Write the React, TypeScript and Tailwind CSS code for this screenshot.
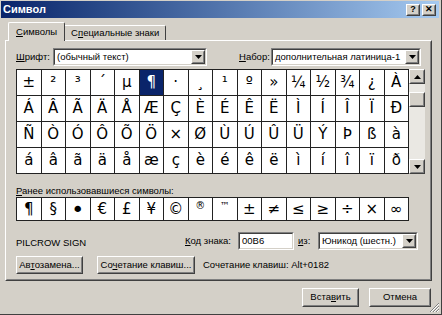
const rows = [
  "±²³´µ¶·¸¹º»¼½¾¿À",
  "ÁÂÃÄÅÆÇÈÉÊËÌÍÎÏÐ",
  "ÑÒÓÔÕÖ×ØÙÚÛÜÝÞßà",
  "áâãäåæçèéêëìíîïð",
];
const recent = "¶§•€£¥©®™±≠≤≥÷×∞";

// glyphs that Tahoma draws smaller or bigger in the recent row
const recentStyle: Record<string, string> = {
  "•": "text-[22px]",
  "®": "text-[10px] -translate-y-[4px]",
  "™": "text-[10px] -translate-y-[4px]",
};

const Sunken = ({ className = "", children }: { className?: string; children?: React.ReactNode }) => (
  <div className={`border border-t-[#808080] border-l-[#808080] border-r-white border-b-white ${className}`}>
    <div className="h-full flex items-center bg-white border border-t-[#404040] border-l-[#404040] border-r-[#d4d0c8] border-b-[#d4d0c8]">
      {children}
    </div>
  </div>
);

const Raised = ({ className = "", children }: { className?: string; children?: React.ReactNode }) => (
  <div className={`bg-[#d4d0c8] border border-t-white border-l-white border-r-[#404040] border-b-[#404040] ${className}`}>
    <div className="h-full flex items-center justify-center border border-t-transparent border-l-transparent border-r-[#808080] border-b-[#808080]">
      {children}
    </div>
  </div>
);

const Arrow = ({ up = false }: { up?: boolean }) => (
  <svg width="7" height="4" viewBox="0 0 7 4">
    <path d={up ? "M3.5 0 L7 4 L0 4 Z" : "M0 0 L7 0 L3.5 4 Z"} fill="#000" />
  </svg>
);

const Select = ({ width, text }: { width: string; text: string }) => (
  <Sunken className={`${width} h-[18px]`}>
    <span className="flex-1 pl-[2px] truncate">{text}</span>
    <Raised className="w-[14px] h-[14px]">
      <Arrow />
    </Raised>
  </Sunken>
);

const Btn = ({ width, children }: { width: string; children: React.ReactNode }) => (
  <Raised className={`${width} h-[18px]`}>
    <span>{children}</span>
  </Raised>
);

export default function App() {
  return (
    <div className="w-[442px] h-[315px] bg-[#d4d0c8] font-['Liberation_Sans',Arial,sans-serif] text-[9.5px] text-black border-r border-b border-[#404040] overflow-hidden flex flex-col relative">
      {/* title bar */}
      <div className="h-[17px] mt-[1px] ml-[1px] mr-[2px] bg-linear-to-r from-[#0a246a] to-[#a6caf0] flex items-center pl-[2px] pr-[3px]">
        <span className="text-white font-bold text-[11px] flex-1">Символ</span>
        <Raised className="w-[14px] h-[12px] mr-[2px]">
          <span className="font-bold text-[9px] leading-none">?</span>
        </Raised>
        <Raised className="w-[14px] h-[12px]">
          <span className="font-bold text-[9px] leading-none">✕</span>
        </Raised>
      </div>

      {/* tabs */}
      <div className="flex items-end h-[18px] mt-[4px] pl-[8px]">
        <div className="relative z-10 -mb-px h-[19px] px-[7px] flex items-center bg-[#d4d0c8] border-t border-l border-white border-r border-r-[#404040] rounded-t-[2px]">
          <span><u>С</u>имволы</span>
        </div>
        <div className="h-[15px] px-[6px] flex items-center border-t border-white border-r border-r-[#404040] rounded-tr-[2px]">
          <span>С<u>п</u>ециальные знаки</span>
        </div>
      </div>

      {/* tab panel */}
      <div className="ml-[5px] w-[427px] h-[241px] border border-t-white border-l-white border-r-[#404040] border-b-[#404040]">
        <div className="h-full border border-transparent border-r-[#808080] border-b-[#808080] pl-[9px] pt-[6px]">
          <div className="flex items-center h-[18px]">
            <span className="w-[37px]"><u>Ш</u>рифт:</span>
            <Select width="w-[154px]" text="(обычный текст)" />
            <span className="ml-[32px] w-[32px]"><u>Н</u>абор:</span>
            <Select width="w-[150px]" text="дополнительная латиница-1" />
          </div>

          <div className="flex mt-[3px]">
            <div className="w-[393px] grid grid-cols-16 border-l border-t border-[#222] font-['DejaVu_Sans',sans-serif] text-[15px]">
              {rows.map((r, ri) =>
                Array.from(r).map((c, ci) => {
                  const sel = ri === 0 && ci === 5;
                  return (
                    <div
                      key={`${ri}-${ci}`}
                      className={`h-[26px] flex items-center justify-center border-r border-b border-[#222] ${
                        sel ? "bg-[#0a246a] text-white" : "bg-white"
                      }`}
                    >
                      {c}
                    </div>
                  );
                })
              )}
            </div>
            <div className="w-[16px] h-[105px] flex flex-col bg-[#eae8e3]">
              <Raised className="w-[16px] h-[15px]">
                <Arrow up />
              </Raised>
              <div className="h-[8px]" />
              <Raised className="w-[16px] h-[15px]" />
              <div className="flex-1" />
              <Raised className="w-[16px] h-[15px]">
                <Arrow />
              </Raised>
            </div>
          </div>

          <div className="mt-[11px] h-[12px] leading-[12px]">
            <u>Р</u>анее использовавшиеся символы:
          </div>

          <div className="w-[393px] grid grid-cols-16 border-l border-t border-[#222] font-['DejaVu_Sans',sans-serif] text-[15px]">
            {Array.from(recent).map((c, i) => (
              <div key={i} className="h-[23px] flex items-center justify-center bg-white border-r border-b border-[#222]">
                <span className={recentStyle[c] ?? ""}>{c}</span>
              </div>
            ))}
          </div>

          <div className="flex items-center h-[18px] mt-[11px]">
            <span className="w-[169px] pt-[4px]">PILCROW SIGN</span>
            <span className="w-[53px]"><u>К</u>од знака:</span>
            <Sunken className="w-[56px] h-[18px]">
              <span className="pl-[2px]">00B6</span>
            </Sunken>
            <span className="ml-[4px] w-[20px]"><u>и</u>з:</span>
            <Select width="w-[100px]" text="Юникод (шестн.)" />
          </div>

          <div className="flex items-center h-[18px] mt-[6px]">
            <Btn width="w-[67px]">Ав<u>т</u>озамена...</Btn>
            <div className="ml-[14px]">
              <Btn width="w-[98px]">Со<u>ч</u>етание клавиш...</Btn>
            </div>
            <span className="ml-[8px]">Сочетание клавиш: Alt+0182</span>
          </div>
        </div>
      </div>

      {/* bottom buttons */}
      <div className="flex justify-end mt-[7px] pr-[10px]">
        <Btn width="w-[57px] h-[19px]">Вста<u>в</u>ить</Btn>
        <div className="ml-[10px]">
          <Btn width="w-[62px] h-[19px]">Отмена</Btn>
        </div>
      </div>

      {/* size grip */}
      <svg className="absolute right-[1px] bottom-[1px]" width="11" height="11" viewBox="0 0 11 11">
        <path d="M10 1 L1 10 M10 4 L4 10 M10 7 L7 10" stroke="#808080" strokeWidth="1" />
        <path d="M10 2 L2 10 M10 5 L5 10 M10 8 L8 10" stroke="#fff" strokeWidth="1" />
      </svg>
    </div>
  );
}
